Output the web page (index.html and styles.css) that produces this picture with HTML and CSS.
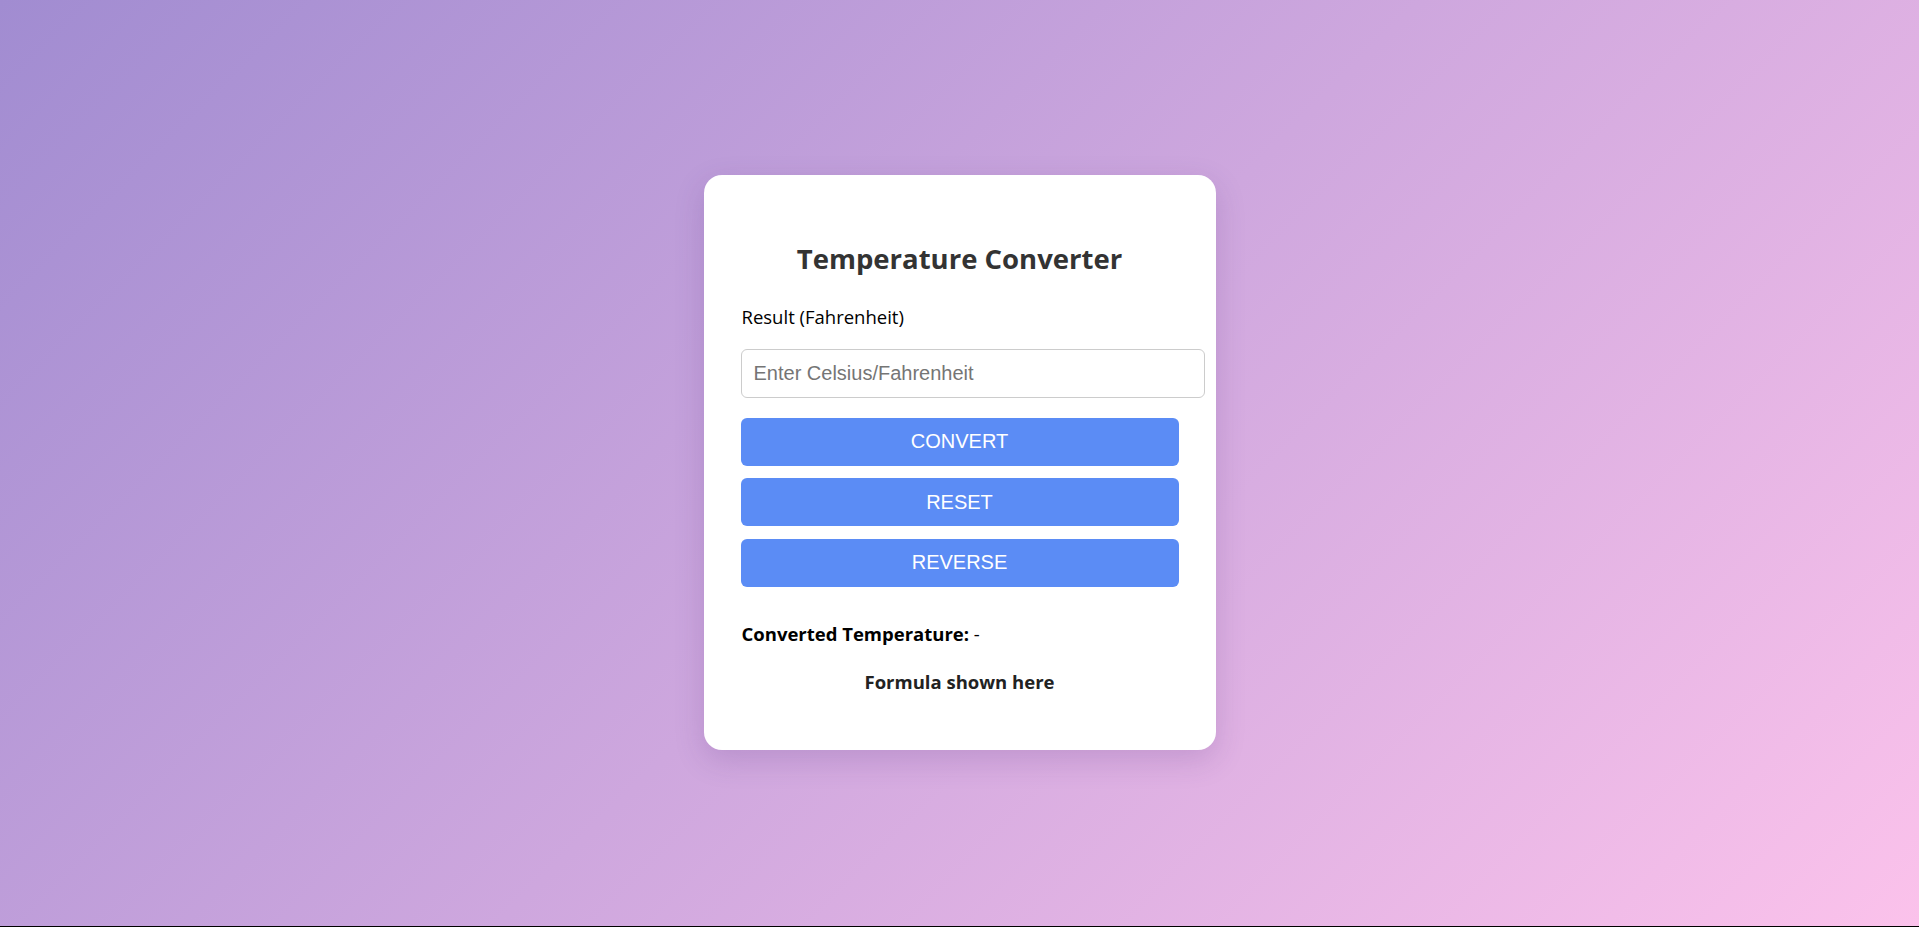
FILE: index.html
```html
<!DOCTYPE html>
<html lang="en">
<head>
<meta charset="utf-8">
<title>Temperature Converter</title>
<link rel="stylesheet" href="styles.css">
</head>
<body>
<main class="page">
  <section class="card">
    <h1 class="title">Temperature Converter</h1>
    <label class="label" for="temp">Result (Fahrenheit)</label>
    <input class="field" id="temp" type="text" placeholder="Enter Celsius/Fahrenheit">
    <div class="actions">
      <button class="btn" type="button">CONVERT</button>
      <button class="btn" type="button">RESET</button>
      <button class="btn" type="button">REVERSE</button>
    </div>
    <p class="result"><strong>Converted Temperature:</strong> -</p>
    <p class="formula">Formula shown here</p>
  </section>
</main>
</body>
</html>
```

FILE: styles.css
```css
html {
  margin: 0;
  background: #000;
}

body {
  margin: 0;
  height: calc(100vh - 1px);
  background: linear-gradient(135deg, #a18cd1 0%, #fbc2eb 100%);
  font-family: "Open Sans", "Noto Sans", sans-serif;
}

.page {
  height: 100%;
  display: flex;
  align-items: center;
  justify-content: center;
}

.card {
  width: 438px;
  padding: 37px;
  margin-top: -2px;
  background: #fff;
  border-radius: 18px;
  box-shadow: 0 10px 30px rgba(80, 40, 120, 0.18);
  display: flex;
  flex-direction: column;
}

.title {
  margin: 31px 0 31px;
  font-size: 27.5px;
  line-height: 32px;
  font-weight: 700;
  color: #333;
  text-align: center;
}

.label {
  font-size: 18.5px;
  line-height: 22px;
  color: #000;
  padding-left: 1px;
}

.field {
  margin-top: 21px;
  width: 100%;
  box-sizing: content-box;
  padding: 12px;
  border: 1px solid #ccc;
  border-radius: 6px;
  font-family: "Liberation Sans", Arial, sans-serif;
  font-size: 20px;
  line-height: 23px;
  color: #333;
  outline: none;
}

.field::placeholder {
  color: #757575;
}

.actions {
  margin-top: 20px;
  display: flex;
  flex-direction: column;
  gap: 12.5px;
}

.btn {
  display: block;
  width: 100%;
  padding: 12.5px 0;
  border: none;
  border-radius: 6px;
  background: #5b8cf5;
  color: #fff;
  font-family: "Liberation Sans", Arial, sans-serif;
  font-size: 20px;
  line-height: 23px;
  cursor: pointer;
}

.result {
  margin: 36.5px 0 0;
  font-size: 18.5px;
  line-height: 22px;
  color: #000;
  padding-left: 1px;
}

.result strong {
  font-weight: 700;
}

.formula {
  margin: 25.5px 0 20px;
  font-size: 18.5px;
  line-height: 22px;
  font-weight: 700;
  color: #222;
  text-align: center;
}
```
